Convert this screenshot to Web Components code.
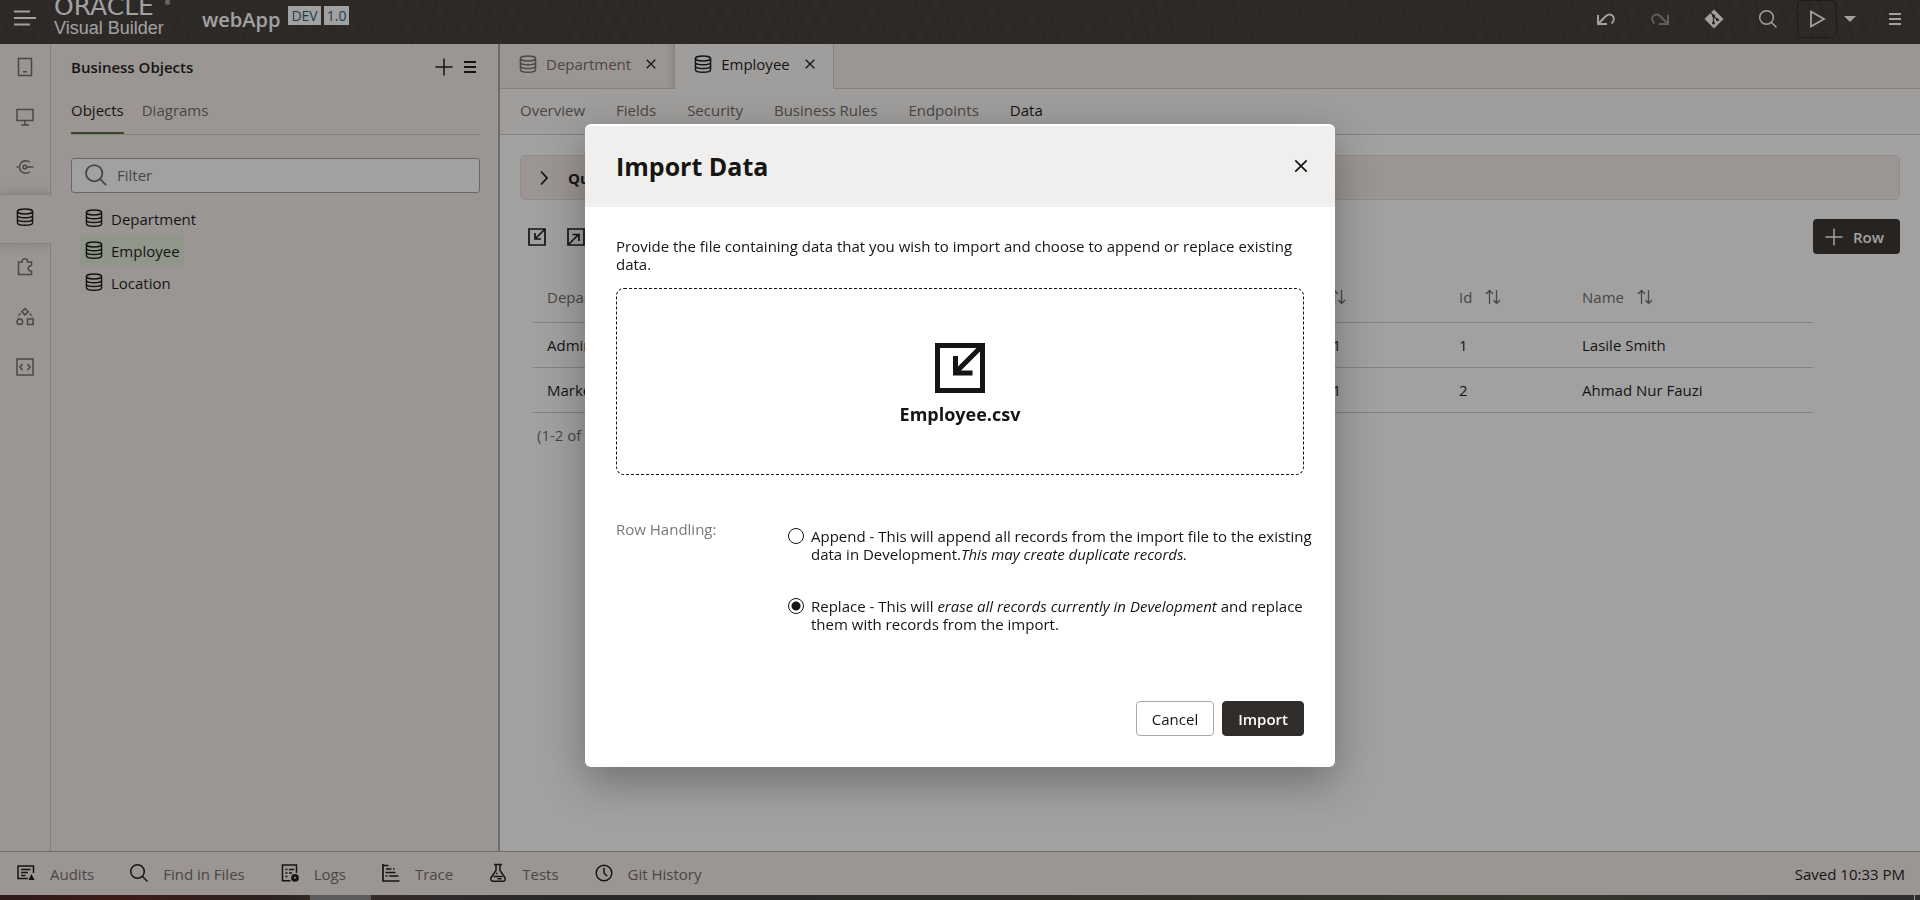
<!DOCTYPE html>
<html lang="en">
<head>
<meta charset="utf-8">
<title>webApp - Visual Builder</title>
<style>
  html, body { margin: 0; height: 100%; }
  body {
    font: 15px/18px "Open Sans", "Noto Sans", sans-serif;
    color: #161513;
    overflow: hidden;
    --muted: #6d6964;
    --panel: #f4ede9;
    --line: #cfcbc8;
    --dark: #312d2a;
  }
</style>
</head>
<body>
<vb-app></vb-app>

<script>
const RESET = `
  *, *::before, *::after { box-sizing: border-box; }
  button { font: inherit; color: inherit; background: none; border: 0; padding: 0; margin: 0; cursor: pointer; }
  a { color: inherit; text-decoration: none; }
  h1, h2, p, ul { margin: 0; padding: 0; }
  li { list-style: none; }
`;

function define(tag, css, html, setup) {
  const tpl = document.createElement('template');
  tpl.innerHTML = `<style>${RESET}${css}</style>${html}`;
  customElements.define(tag, class extends HTMLElement {
    constructor() {
      super();
      this.attachShadow({ mode: 'open' }).append(tpl.content.cloneNode(true));
    }
    connectedCallback() { if (setup) setup(this, this.shadowRoot); }
  });
}

/* Line icons on a square grid: [viewBox size, markup] */
const ICONS = {
  nav: [22, '<path d="M0 4.500h16M0 11h22M0 17.500h16" stroke-width="2.200"/>'],
  undo: [20, '<path d="M2 6v9h9M2.500 14.500l7.500-7.500c2-1.900 5.200-2 6.800 0 1.600 2.100 1.200 5.400-1.300 7.500" stroke-width="2"/>'],
  redo: [20, '<path d="M18 6v9H9M17.500 14.500L10 7C8 5.100 4.800 5 3.200 7 1.600 9.100 2 12.400 4.500 14.500" stroke-width="2"/>'],
  git: [20, '<path d="M10 .5l9.500 9.500-9.500 9.500L.5 10z" fill="currentColor" stroke="none"/><path d="M6.500 3.500l3 3v8M9.500 7l4 4" stroke="#312d2a" stroke-width="1.200"/><circle cx="9.500" cy="6.800" r="1.500" fill="#312d2a" stroke="none"/><circle cx="9.500" cy="14" r="1.500" fill="#312d2a" stroke="none"/><circle cx="13.500" cy="10.800" r="1.500" fill="#312d2a" stroke="none"/>'],
  search: [20, '<circle cx="8.500" cy="8.500" r="6.800"/><path d="M13.300 13.300l5.200 5.200"/>'],
  play: [20, '<path d="M4 2.500v15L17 10z" stroke-width="1.800"/>'],
  caret: [12, '<path d="M0 3h12L6 9z" fill="currentColor" stroke="none"/>'],
  menu: [14, '<path d="M1 2h12M1 7h12M1 12h12" stroke-width="2"/>'],
  tablet: [20, '<path d="M3.500 1.500h13v17h-13zM8 14.800h4"/>'],
  desktop: [20, '<path d="M2 2.500h16v11H2zM10 13.500v4M6 18h8"/>'],
  service: [20, '<path d="M14.800 5.200a6.300 6.300 0 1 0 0 9.600M3.500 10H1.500M11.500 10h7"/><circle cx="9.800" cy="10" r="1.800"/>'],
  data: [20, '<ellipse cx="10" cy="4.500" rx="7.600" ry="2.500"/><path d="M2.400 4.500v11.300c0 1.400 3.400 2.500 7.600 2.500s7.600-1.100 7.600-2.500V4.500M2.400 8.300c0 1.400 3.400 2.500 7.600 2.500s7.600-1.100 7.600-2.500M2.400 12c0 1.400 3.400 2.500 7.600 2.500s7.600-1.100 7.600-2.500" stroke-width="1.400"/>'],
  puzzle: [20, '<path d="M3.500 5h3.700c-.3-2.200 1-3.300 2.700-3.300S12.800 2.800 12.500 5h4v3.500c-2 .2-3.400 1.200-3.400 2.800s1.400 2.700 3.400 2.900v3.300h-13z"/>'],
  shapes: [20, '<path d="M10 1.500l3.200 3.200L10 7.900 6.800 4.700zM12.500 12H18v5.500h-5.500z"/><circle cx="4.800" cy="14.800" r="2.800"/><path d="M5.500 6.500C4 7.800 3 9 2.700 10.500M14.500 6.500c1.500 1.300 2.500 2.500 2.800 4" stroke-dasharray="3 1.500"/>'],
  code: [20, '<path d="M2 2h16v16H2zM7.500 7L5 10l2.500 3M12.500 7l2.500 3-2.500 3"/>'],
  plus: [20, '<path d="M10 1.500v17M1.500 10h17"/>'],
  close: [14, '<path d="M2 2l10 10M12 2L2 12" stroke-width="1.500"/>'],
  chevron: [16, '<path d="M5 1.500L11 8l-6 6.500" stroke-width="1.800"/>'],
  import: [20, '<path d="M2 2h16v16H2zM17.500 2.500L9 11M8 6v6h6" stroke-width="1.700"/>'],
  export: [20, '<path d="M2 2h16v16H2zM2.500 17.500L12 8M6.500 7.500H13v6.500" stroke-width="1.700"/>'],
  sort: [16, '<path d="M4.500 15V1.500M1 5l3.500-3.500L8 5M11.500 1v13.500M8.500 11l3 3.500L15 11" stroke-width="1.300"/>'],
  audits: [20, '<path d="M12 15.500H2V3h15.500v7M5 6.500h9.500M5 9.500h7M5 12.500h4.500"/><path d="M15.500 11l3 6h-6z" fill="currentColor" stroke="none"/>'],
  logs: [20, '<path d="M10.500 17.800H2.500V2h14v8M5.500 6.500h2M9 6.500h5M5.500 10h2M9 10h3M5.500 13.500h2"/><circle cx="15" cy="14.800" r="3.900" fill="currentColor" stroke="none"/><circle cx="15" cy="14.800" r="1" fill="#f4ede9" stroke="none"/>'],
  trace: [20, '<path d="M2 1v17h16.500M2 2.500h5.500M5 6h5.500M12 6h1.500M4.500 9.500h10M8 13h9.500M4.500 13h2" stroke-width="1.700"/>'],
  tests: [20, '<path d="M6 1.500h8M8 1.500v6L3.200 14.500c-1.200 2 .1 3.700 1.800 3.700h10c1.700 0 3-1.700 1.800-3.700L12 7.500v-6M5.500 13.500h9M8 10.500h1.500M9.500 15.800h4"/>'],
  clock: [20, '<circle cx="10" cy="10" r="7.800"/><path d="M10 4.800V10l3.200 3.200"/>']
};

define('vb-icon',
  `:host { display: inline-flex; flex: none; width: var(--size, 20px); height: var(--size, 20px); }
   svg { width: 100%; height: 100%; fill: none; stroke: currentColor; stroke-width: 1.500; display: block; }`,
  ``,
  (el, root) => {
    const [box, body] = ICONS[el.getAttribute('name')];
    root.lastElementChild.insertAdjacentHTML('afterend',
      `<svg viewBox="0 0 ${box} ${box}" aria-hidden="true">${body}</svg>`);
  });

define('vb-header',
  `:host {
     display: flex; align-items: center; height: 44px; flex: none; overflow: hidden;
     padding: 0 18px 0 14px; color: #fff; background-color: #3e3936;
     background-image:
       repeating-radial-gradient(ellipse 300px 160px at 8% 190%, #0000 0 8px, #0000000c 9px 11px, #0000 12px 13px),
       repeating-radial-gradient(ellipse 420px 240px at 72% 240%, #0000 0 9px, #0000000c 10px 12px, #0000 13px 14px);
   }
   .nav { --size: 22px; display: flex; margin-top: -8px; }
   .brand { margin-left: 18px; width: 148px; display: flex; flex-direction: column; align-self: flex-start; }
   .oracle { display: flex; justify-content: space-between; width: 117px; height: 18px; margin-top: -3px; font: 25px/20px "DejaVu Sans", sans-serif; }
   .oracle small { font-size: 7px; line-height: 12px; }
   .name { font: 18px/22px "Liberation Sans", Arial, sans-serif; margin-top: 2px; }
   h1 { font-size: 20px; line-height: 24px; font-weight: 600; margin-top: -5px; margin-right: 5px; }
   .tag { background: #fff; color: #1b5a7a; padding: 0 3px; font-size: 14px; line-height: 19px; margin: -14px 0 0 3px; }
   .tools { margin-left: auto; display: flex; align-items: center; align-self: flex-start; height: 38px; }
   .tools button { display: flex; align-items: center; justify-content: center; height: 38px; width: 40px; margin-left: 14px; }
   .tools button[disabled] { opacity: .45; }
   .tools .run { border: 1px dotted #0d0c0b; border-radius: 5px; margin-left: 9px; }
   .tools .more { width: 26px; margin-left: 0; --size: 12px; }
   .tools .menu { width: 14px; --size: 14px; margin-left: 25px; }`,
  `<button class="nav" aria-label="Navigation"><vb-icon name="nav"></vb-icon></button>
   <div class="brand"><span class="oracle">ORACLE<small>®</small></span><span class="name">Visual Builder</span></div>
   <h1>webApp</h1><span class="tag">DEV</span><span class="tag">1.0</span>
   <div class="tools">
     <button aria-label="Undo"><vb-icon name="undo"></vb-icon></button>
     <button aria-label="Redo" disabled><vb-icon name="redo"></vb-icon></button>
     <button aria-label="Git"><vb-icon name="git"></vb-icon></button>
     <button aria-label="Search"><vb-icon name="search"></vb-icon></button>
     <button class="run" aria-label="Preview"><vb-icon name="play"></vb-icon></button>
     <button class="more" aria-label="Preview options"><vb-icon name="caret"></vb-icon></button>
     <button class="menu" aria-label="Menu"><vb-icon name="menu"></vb-icon></button>
   </div>`);

define('vb-rail',
  `:host { display: flex; flex-direction: column; flex: none; width: 51px; color: var(--muted); border-right: 1px solid var(--line); }
   a { height: 50px; width: 51px; display: flex; align-items: center; justify-content: center; padding: 0 2px 4px 0; }
   a[aria-current] { color: #161513; background: var(--panel); border: solid var(--line); border-width: 1px 0; box-shadow: 0 0 12px #0003; clip-path: inset(-12px 0 -12px 0); }`,
  `<a href="#mobile" aria-label="Mobile applications"><vb-icon name="tablet"></vb-icon></a>
   <a href="#web" aria-label="Web applications"><vb-icon name="desktop"></vb-icon></a>
   <a href="#services" aria-label="Services"><vb-icon name="service"></vb-icon></a>
   <a href="#objects" aria-label="Business objects" aria-current="page"><vb-icon name="data"></vb-icon></a>
   <a href="#components" aria-label="Components"><vb-icon name="puzzle"></vb-icon></a>
   <a href="#processes" aria-label="Processes"><vb-icon name="shapes"></vb-icon></a>
   <a href="#source" aria-label="Source"><vb-icon name="code"></vb-icon></a>`);

define('vb-object-panel',
  `:host { display: block; flex: none; width: 449px; padding: 0 18px 0 20px; border-right: 2px solid #a9a5a1; }
   header { display: flex; align-items: center; height: 45px; gap: 9px; --size: 20px; padding-right: 3px; }
   h2 { font-size: 15px; line-height: 18px; font-weight: 600; flex: 1; }
   header button { display: flex; }
   .menu { --size: 14px; }
   nav { display: flex; gap: 18px; height: 46px; border-bottom: 1px solid var(--line); color: var(--muted); }
   nav a { padding-top: 12px; height: 45px; }
   nav a[aria-current] { color: #161513; border-bottom: 2px solid #4e6b3c; }
   .filter { display: flex; align-items: center; gap: 9px; height: 35px; margin: 23px 0 10px; padding: 0 12px 2px; border: 1px solid #a19d99; border-radius: 3px; background: #fff; color: var(--muted); --size: 24px; }
   input { font: inherit; flex: 1; min-width: 0; border: 0; outline: 0; background: none; color: inherit; padding: 0; }
   input::placeholder { color: #6d6964; opacity: 1; }
   ul { padding-left: 9px; }
   li a { display: inline-flex; align-items: center; gap: 7px; height: 32px; padding: 0 4px; vertical-align: top; }
   li a vb-icon { margin-bottom: 3px; }
   li a[aria-current] { background: #e3edd9; }`,
  `<header><h2>Business Objects</h2>
     <button aria-label="Add"><vb-icon name="plus"></vb-icon></button>
     <button class="menu" aria-label="Panel menu"><vb-icon name="menu"></vb-icon></button></header>
   <nav><a href="#list" aria-current="page">Objects</a><a href="#diagrams">Diagrams</a></nav>
   <label class="filter"><vb-icon name="search"></vb-icon><input type="text" placeholder="Filter" aria-label="Filter"></label>
   <ul>
     <li><a href="#department"><vb-icon name="data"></vb-icon>Department</a></li>
     <li><a href="#employee" aria-current="true"><vb-icon name="data"></vb-icon>Employee</a></li>
     <li><a href="#location"><vb-icon name="data"></vb-icon>Location</a></li>
   </ul>`);

define('vb-doc-tab',
  `:host { display: flex; align-items: center; gap: 8px; height: 45px; padding: 0 17px 4px 18px; color: var(--muted); border-right: 1px solid var(--line); border-bottom: 1px solid var(--line); box-shadow: inset -8px 0 8px -6px #0002; }
   :host([active]) { color: #161513; background: #fbfaf8; border-bottom-color: #fbfaf8; box-shadow: none; }
   button { display: flex; color: #161513; --size: 12px; margin-left: 6px; }`,
  `<vb-icon name="data"></vb-icon><slot></slot><button aria-label="Close tab"><vb-icon name="close"></vb-icon></button>`);

define('vb-table',
  `:host { display: block; }
   table { width: 100%; border-collapse: collapse; table-layout: fixed; text-align: left; }
   th { font-weight: 400; color: var(--muted); height: 50px; }
   td { height: 45px; }
   th, td { padding: 0 14px; border-bottom: 1px solid var(--line); white-space: nowrap; }
   .sort { display: flex; align-items: center; gap: 13px; --size: 16px; }
   th.end { padding-right: 99px; }
   td.end { text-align: right; padding-right: 104px; }
   .end .sort { justify-content: flex-end; }`,
  `<table>
     <colgroup><col><col style="width:290px"><col style="width:123px"><col style="width:245px"></colgroup>
     <thead><tr>
       <th><span class="sort">Department</span></th>
       <th class="end"><span class="sort">Age<vb-icon name="sort"></vb-icon></span></th>
       <th><span class="sort">Id<vb-icon name="sort"></vb-icon></span></th>
       <th><span class="sort">Name<vb-icon name="sort"></vb-icon></span></th>
     </tr></thead>
     <tbody></tbody>
   </table>`,
  (el, root) => {
    const rows = [['Administration', '1', '1', 'Lasile Smith'], ['Marketing', '1', '2', 'Ahmad Nur Fauzi']];
    root.querySelector('tbody').innerHTML = rows.map(r =>
      `<tr>${r.map((c, i) => `<td${i === 1 ? ' class="end"' : ''}>${c}</td>`).join('')}</tr>`).join('');
  });

define('vb-editor',
  `:host { display: flex; flex-direction: column; flex: 1; min-width: 0; background: #fff; }
   .tabs { display: flex; height: 45px; flex: none; background: var(--panel); }
   .tabs::after { content: ""; flex: 1; border-bottom: 1px solid var(--line); }
   nav { display: flex; flex: none; gap: 31px; height: 46px; padding: 12px 20px 0; background: #fbfaf8; border-bottom: 1px solid var(--line); color: var(--muted); }
   nav a[aria-current] { color: #161513; }
   .content { padding: 20px 20px 0; }
   .query { display: flex; align-items: center; gap: 16px; width: 100%; height: 45px; padding: 0 15px; font-weight: 700; background: var(--panel); border: 1px solid #e4dcd8; border-radius: 5px; --size: 16px; }
   .bar { display: flex; align-items: center; gap: 19px; height: 35px; margin-top: 19px; padding-left: 7px; }
   .bar button { display: flex; }
   .bar .row { margin-left: auto; align-items: center; gap: 9px; height: 35px; padding: 0 16px 0 11px; background: #312d2a; color: #fff; font-weight: 600; border-radius: 4px; }
   vb-table { margin: 18px 87px 0 13px; }
   .count { padding: 13px 17px; color: var(--muted); }`,
  `<div class="tabs"><vb-doc-tab>Department</vb-doc-tab><vb-doc-tab active>Employee</vb-doc-tab></div>
   <nav><a href="#overview">Overview</a><a href="#fields">Fields</a><a href="#security">Security</a><a href="#rules">Business Rules</a><a href="#endpoints">Endpoints</a><a href="#data" aria-current="page">Data</a></nav>
   <div class="content">
     <button class="query"><vb-icon name="chevron"></vb-icon>Query</button>
     <div class="bar">
       <button aria-label="Import data"><vb-icon name="import"></vb-icon></button>
       <button aria-label="Export data"><vb-icon name="export"></vb-icon></button>
       <button class="row"><vb-icon name="plus"></vb-icon>Row</button>
     </div>
     <vb-table></vb-table>
     <p class="count">(1-2 of 2 items)</p>
   </div>`);

define('vb-footer',
  `:host { display: flex; flex: none; align-items: center; height: 44px; padding: 0 15px 0 16px; border-top: 1px solid #a9a5a1; background: var(--panel); color: var(--muted); }
   button { display: flex; align-items: center; gap: 14px; margin-right: 35px; }
   vb-icon { color: #161513; margin-bottom: 2px; }
   .saved { margin-left: auto; color: #161513; }`,
  `<button><vb-icon name="audits"></vb-icon>Audits</button>
   <button><vb-icon name="search"></vb-icon>Find in Files</button>
   <button><vb-icon name="logs"></vb-icon>Logs</button>
   <button><vb-icon name="trace"></vb-icon>Trace</button>
   <button><vb-icon name="tests"></vb-icon>Tests</button>
   <button><vb-icon name="clock"></vb-icon>Git History</button>
   <span class="saved">Saved 10:33 PM</span>`);

define('vb-desktop-edge',
  `:host { display: flex; flex: none; height: 5px; background: linear-gradient(90deg, #3a1f1c, #5a201a 6%, #3a2c28 14%, #4a3a38 19%, #35363a 30%, #3c3a30 55%, #4a4d3a 80%, #454545 92%, #404040); }
   i { width: 61px; margin-left: 310px; background: #8d8a8a; }
   b { width: 1px; margin: 0 5px 0 auto; background: #eee; }`,
  `<i></i><b></b>`);

define('vb-dialog',
  `:host { position: fixed; inset: 0; background: rgba(22, 21, 19, .4); }
   section { position: absolute; left: 0; right: 0; top: 124px; margin: 0 auto; width: 750px; background: #fff; border-radius: 6px; overflow: hidden; box-shadow: 0 14px 44px #00000052; border-top: 2px solid #fff; }
   header { display: flex; align-items: center; justify-content: space-between; height: 81px; padding: 0 26px 2px 31px; background: #f0efed; }
   h2 { font-size: 25px; line-height: 32px; font-weight: 700; }
   header button { display: flex; --size: 16px; }
   .body { padding: 30px 31px 0; }
   .drop { display: flex; flex-direction: column; align-items: center; justify-content: center; gap: 9px; height: 187px; width: 100%; margin: 15px 0 45px; padding-top: 6px; border: 1px dashed #161513; border-radius: 8px; font-size: 18px; line-height: 24px; font-weight: 700; }
   .drop svg { width: 50px; height: 50px; fill: none; stroke: currentColor; stroke-width: 5; }
   fieldset { display: grid; grid-template-columns: 172px 1fr; border: 0; margin: 0 -16px 0 0; padding: 0; }
   .legend { color: #7c7975; }
   .choices { display: grid; gap: 34px; padding-top: 7px; }
   label { display: grid; grid-template-columns: 16px 1fr; column-gap: 7px; }
   input { appearance: none; width: 16px; height: 16px; margin: 1px 0 0; border: 1px solid #161513; border-radius: 50%; background: #fff; }
   input:checked { background: radial-gradient(#161513 0 4px, #fff 5px); }
   footer { display: flex; justify-content: flex-end; gap: 8px; padding: 68px 31px 31px; }
   footer button { height: 35px; padding: 0 15px; border: 1px solid #aaa7a4; border-radius: 4px; }
   footer .primary { background: #312d2a; border-color: #312d2a; color: #fff; font-weight: 600; }`,
  `<section role="dialog" aria-modal="true" aria-labelledby="title">
     <header><h2 id="title">Import Data</h2><button aria-label="Close"><vb-icon name="close"></vb-icon></button></header>
     <div class="body">
       <p>Provide the file containing data that you wish to import and choose to append or replace existing data.</p>
       <button class="drop"><svg viewBox="0 0 50 50" aria-hidden="true"><path d="M2.500 2.500h45v45h-45zM47 3L21 29M20.500 13v17H37.500"/></svg>Employee.csv</button>
       <fieldset aria-labelledby="handling">
         <span class="legend" id="handling">Row Handling:</span>
         <div class="choices">
           <label><input type="radio" name="mode"><span>Append - This will append all records from the import file to the existing data in Development.<em>This may create duplicate records.</em></span></label>
           <label><input type="radio" name="mode" checked><span>Replace - This will <em>erase all records currently in Development</em> and replace them with records from the import.</span></label>
         </div>
       </fieldset>
     </div>
     <footer><button>Cancel</button><button class="primary">Import</button></footer>
   </section>`);

define('vb-app',
  `:host { display: flex; flex-direction: column; min-height: 100vh; background: var(--panel); }
   main { display: flex; flex: 1; min-height: 0; }`,
  `<vb-header></vb-header>
   <main><vb-rail></vb-rail><vb-object-panel></vb-object-panel><vb-editor></vb-editor></main>
   <vb-footer></vb-footer>
   <vb-desktop-edge></vb-desktop-edge>
   <vb-dialog></vb-dialog>`);
</script>
</body>
</html>
